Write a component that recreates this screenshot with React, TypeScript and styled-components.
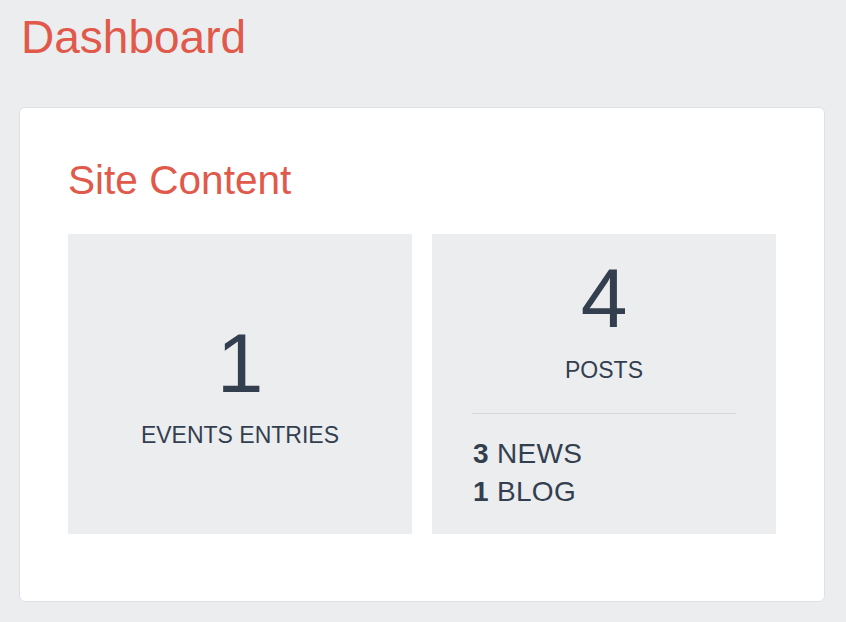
import React from 'react';
import styled, { createGlobalStyle } from 'styled-components';

const RED = '#e0594a';
const INK = '#333f4f';

const GlobalStyle = createGlobalStyle`
  html, body {
    margin: 0;
    padding: 0;
    background: #ebedef;
    font-family: "Liberation Sans", Arial, sans-serif;
  }
`;

const posts = [
  { count: 3, label: 'NEWS' },
  { count: 1, label: 'BLOG' },
];

export default function App() {
  return (
    <>
      <GlobalStyle />
      <Page>
        <Title>Dashboard</Title>
        <Card>
          <Heading>Site Content</Heading>
          <Tiles>
            <Tile>
              <BigNumber>1</BigNumber>
              <Caption>EVENTS ENTRIES</Caption>
            </Tile>
            <Tile>
              <BigNumber>4</BigNumber>
              <Caption>POSTS</Caption>
              <Divider />
              <Breakdown>
                {posts.map((p) => (
                  <BreakdownRow key={p.label}>
                    <strong>{p.count}</strong> {p.label}
                  </BreakdownRow>
                ))}
              </Breakdown>
            </Tile>
          </Tiles>
        </Card>
      </Page>
    </>
  );
}

const Page = styled.div`
  padding: 14px 21px 20px 19px;
`;

const Title = styled.h1`
  margin: 0 0 0 2px;
  font-size: 46px;
  line-height: 1;
  font-weight: 400;
  color: ${RED};
`;

const Card = styled.div`
  margin-top: 47px;
  background: #fff;
  border: 1px solid #dfe1e4;
  border-radius: 6px;
  padding: 52px 48px 67px;
`;

const Heading = styled.h2`
  margin: 0 0 33px;
  font-size: 40.6px;
  line-height: 1;
  font-weight: 400;
  color: ${RED};
`;

const Tiles = styled.div`
  display: grid;
  grid-template-columns: 1fr 1fr;
  gap: 20px;
`;

const Tile = styled.div`
  height: 300px;
  background: #ebedef;
  display: flex;
  flex-direction: column;
  justify-content: center;
  color: ${INK};
`;

const BigNumber = styled.div`
  font-size: 84px;
  line-height: 1;
  text-align: center;
`;

const Caption = styled.div`
  margin-top: 19px;
  font-size: 23px;
  line-height: 1;
  text-align: center;
`;

const Divider = styled.hr`
  margin: 31px 40px 0;
  border: 0;
  border-top: 1px solid #d5d7da;
`;

const Breakdown = styled.div`
  margin-top: 21px;
  padding: 0 40px 0 41px;
`;

const BreakdownRow = styled.div`
  font-size: 28px;
  line-height: 38px;
  letter-spacing: 0.3px;

  strong {
    font-weight: 700;
  }
`;
